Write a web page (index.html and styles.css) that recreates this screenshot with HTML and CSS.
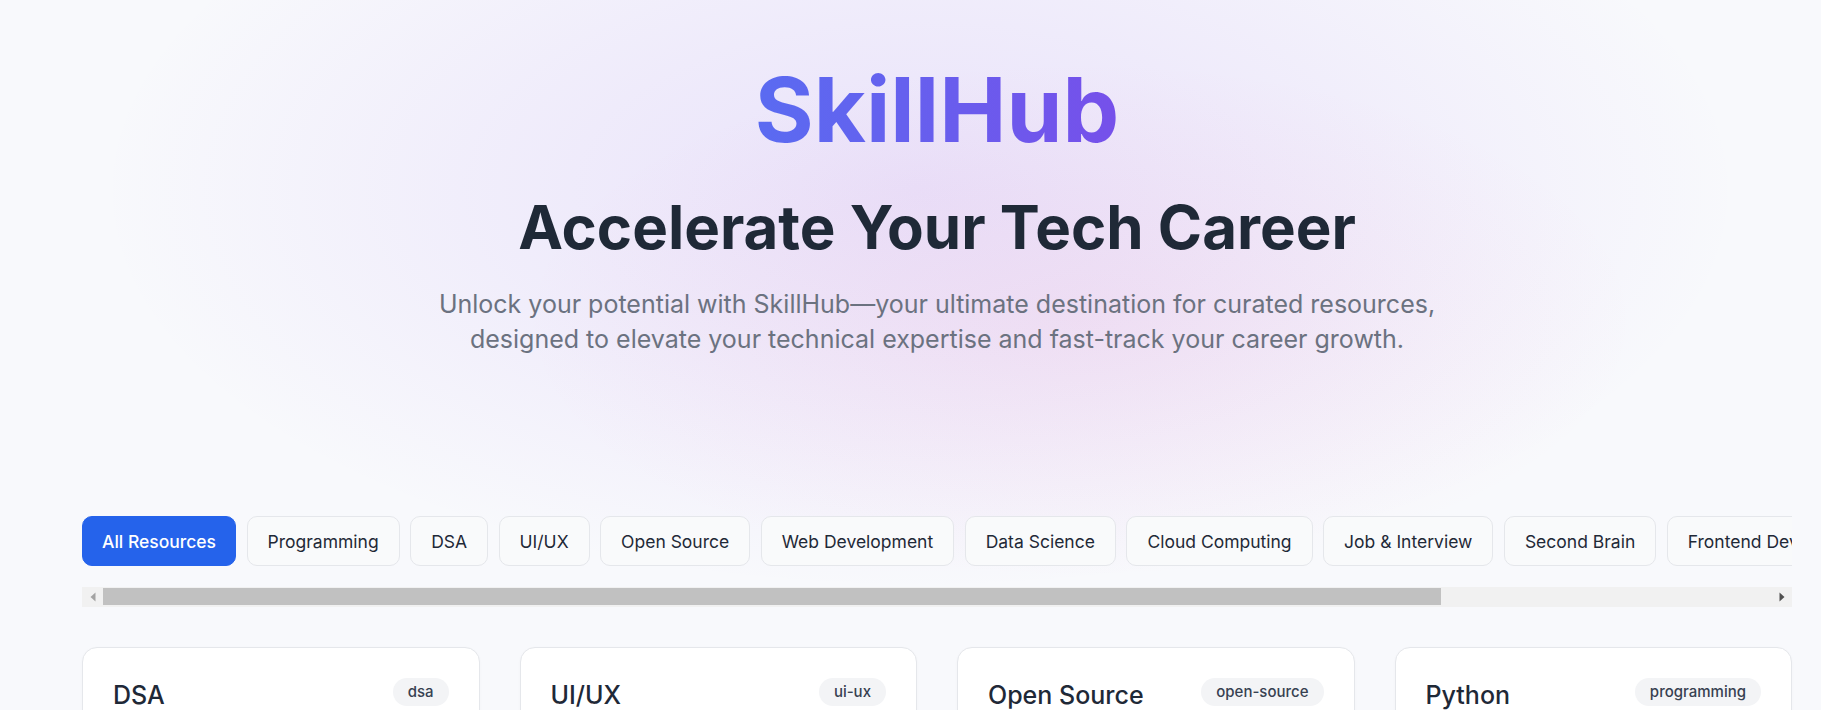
FILE: index.html
```html
<!DOCTYPE html>
<html lang="en">
<head>
<meta charset="utf-8">
<title>SkillHub</title>
<link rel="stylesheet" href="styles.css">
</head>
<body>
<div class="page">
  <header class="hero">
    <h1 class="brand">SkillHub</h1>
    <h2 class="headline">Accelerate Your Tech Career</h2>
    <p class="lead">Unlock your potential with SkillHub—your ultimate destination for curated resources, designed to elevate your technical expertise and fast-track your career growth.</p>
  </header>

  <section class="filter-bar">
    <nav class="filters">
      <button class="chip active">All Resources</button>
      <button class="chip">Programming</button>
      <button class="chip">DSA</button>
      <button class="chip">UI/UX</button>
      <button class="chip">Open Source</button>
      <button class="chip">Web Development</button>
      <button class="chip">Data Science</button>
      <button class="chip">Cloud Computing</button>
      <button class="chip">Job &amp; Interview</button>
      <button class="chip">Second Brain</button>
      <button class="chip">Frontend Development</button>
      <button class="chip">Machine Learning</button>
      <button class="chip">DevOps</button>
    </nav>
    <div class="hscroll" aria-hidden="true">
      <span class="hs-btn hs-left"><svg width="6" height="10" viewBox="0 0 6 10"><path d="M5.5 0.5 L0.5 5 L5.5 9.5 Z" fill="#a3a3a3"/></svg></span>
      <div class="hs-track"><div class="hs-thumb" style="width: 80.1%"></div></div>
      <span class="hs-btn hs-right"><svg width="6" height="10" viewBox="0 0 6 10"><path d="M0.5 0.5 L5.5 5 L0.5 9.5 Z" fill="#505050"/></svg></span>
    </div>
  </section>

  <main class="grid">
    <article class="card">
      <div class="card-head"><h3 class="card-title">DSA</h3><span class="tag">dsa</span></div>
      <p class="card-text">Master data structures and algorithms with curated problem sets and guides.</p>
    </article>
    <article class="card">
      <div class="card-head"><h3 class="card-title">UI/UX</h3><span class="tag">ui-ux</span></div>
      <p class="card-text">Design principles, tools and inspiration for crafting great user experiences.</p>
    </article>
    <article class="card">
      <div class="card-head"><h3 class="card-title">Open Source</h3><span class="tag">open-source</span></div>
      <p class="card-text">Find projects and learn how to make your first open source contributions.</p>
    </article>
    <article class="card">
      <div class="card-head"><h3 class="card-title">Python</h3><span class="tag">programming</span></div>
      <p class="card-text">Learn Python from the basics to advanced topics with hand-picked resources.</p>
    </article>
  </main>
</div>
</body>
</html>
```

FILE: styles.css
```css
html {
  scrollbar-width: none;
}
body {
  margin: 0;
  font-family: Inter, "Noto Sans", "Liberation Sans", sans-serif;
  background-color: #f8f9fc;
  overflow-x: hidden;
  color: #1f2937;
}
.page {
  width: 1874px;
  box-sizing: border-box;
  padding: 0 82px 80px;
  background:
    radial-gradient(ellipse 560px 260px at 1080px 320px, rgba(236, 72, 153, 0.08), rgba(236, 72, 153, 0) 100%),
    radial-gradient(ellipse 820px 400px at 920px 190px, rgba(124, 58, 237, 0.12), rgba(124, 58, 237, 0.06) 55%, rgba(124, 58, 237, 0) 100%),
    #f8f9fc;
}
.hero {
  padding-top: 60px;
  text-align: center;
}
.brand {
  display: inline-block;
  margin: 0;
  font-size: 90px;
  line-height: 1.1;
  font-weight: 700;
  background: linear-gradient(90deg, #5a6bf1, #7650ea);
  -webkit-background-clip: text;
  background-clip: text;
  color: transparent;
}
.headline {
  margin: 32px 0 0;
  font-size: 60px;
  line-height: 72px;
  font-weight: 700;
  color: #1f2937;
}
.lead {
  margin: 24px auto 0;
  max-width: 1040px;
  font-size: 25px;
  line-height: 35px;
  color: #6b7280;
}
.filter-bar {
  margin-top: 159px;
}
.filters {
  display: flex;
  gap: 10.5px;
  padding-bottom: 21px;
  overflow-x: auto;
  scrollbar-width: none;
}
.chip {
  flex: 0 0 auto;
  font-family: inherit;
  font-size: 17.5px;
  line-height: 25px;
  font-weight: 400;
  color: #1f2937;
  background: #f9fafb;
  border: 1px solid #e5e7eb;
  border-radius: 10px;
  padding: 11.5px 20px;
  white-space: nowrap;
  cursor: pointer;
}
.chip.active {
  background: #2563eb;
  border-color: #2563eb;
  color: #ffffff;
  font-weight: 500;
  padding: 11.5px 19px;
}
.hscroll {
  display: flex;
  height: 20px;
  background: #f1f1f1;
}
.hs-btn {
  flex: 0 0 19px;
  display: flex;
  align-items: center;
}
.hs-left {
  padding-left: 8px;
  box-sizing: border-box;
}
.hs-right {
  padding-left: 6px;
  box-sizing: border-box;
}
.hs-track {
  flex: 1 1 auto;
  padding: 1px 0 2px 2px;
}
.hs-thumb {
  height: 100%;
  background: #c1c1c1;
}
.grid {
  display: grid;
  grid-template-columns: repeat(4, 1fr);
  gap: 40px;
  margin-top: 40px;
}
.card {
  background: #ffffff;
  border: 1px solid #e5e7eb;
  border-radius: 15px;
  padding: 29px 30px 30px;
  box-shadow: 0 1px 3px rgba(0, 0, 0, 0.03);
}
.card-head {
  display: flex;
  justify-content: space-between;
  align-items: flex-start;
  gap: 12px;
}
.card-title {
  margin: 0;
  font-size: 25px;
  line-height: 37.5px;
  font-weight: 500;
  color: #1f2937;
}
.tag {
  flex: 0 0 auto;
  margin-top: 1px;
  font-size: 15px;
  line-height: 18px;
  font-weight: 500;
  color: #374151;
  background: #f3f4f6;
  border-radius: 999px;
  padding: 5px 15px;
}
.card-text {
  margin: 16px 0 0;
  font-size: 17.5px;
  line-height: 28px;
  color: #6b7280;
}
```
